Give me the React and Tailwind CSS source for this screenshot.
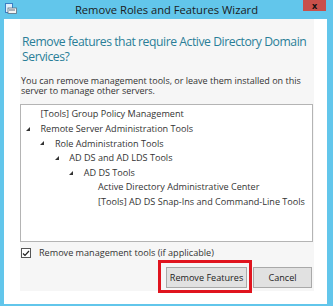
const font = { fontFamily: '"Open Sans", "Noto Sans", sans-serif' };

const rows = [
  { level: 0, label: '[Tools] Group Policy Management', leaf: true },
  { level: 0, label: 'Remote Server Administration Tools' },
  { level: 1, label: 'Role Administration Tools' },
  { level: 2, label: 'AD DS and AD LDS Tools' },
  { level: 3, label: 'AD DS Tools' },
  { level: 4, label: 'Active Directory Administrative Center', leaf: true },
  { level: 4, label: '[Tools] AD DS Snap-Ins and Command-Line Tools', leaf: true },
];

function TreeRow({ level, label, leaf }) {
  return (
    <div className="flex items-center h-[14.6px]" style={{ paddingLeft: 5 + level * 14.4 }}>
      <span className="w-[14.5px] shrink-0 flex items-center">
        {!leaf && (
          <svg width="4" height="4" viewBox="0 0 4 4">
            <path d="M4 0 L4 4 L0 4 Z" fill="#333" />
          </svg>
        )}
      </span>
      <span className="whitespace-nowrap">{label}</span>
    </div>
  );
}

export default function App() {
  return (
    <div className="w-[333px] h-[306px] bg-[#62c6eb] flex flex-col overflow-hidden text-[#262626]" style={font}>
      {/* title bar */}
      <div className="h-[19px] shrink-0 flex items-start">
        <div className="w-[30px] pl-[5px] pt-[3px] shrink-0">
          <svg width="12" height="11" viewBox="0 0 12 11">
            <rect x="0.5" y="0.5" width="7" height="9" fill="#dfeefa" stroke="#3b7fc4" />
            <rect x="3" y="5" width="8.5" height="5.5" fill="#f4f4f4" stroke="#5a6e80" strokeWidth="0.8" />
            <rect x="4" y="6.5" width="6" height="1" fill="#5a6e80" />
          </svg>
        </div>
        <div className="flex-1 text-center pt-[3px] text-[11.2px] leading-[13px] text-[#1b1b1b] whitespace-nowrap">
          Remove Roles and Features Wizard
        </div>
        <div className="w-[23px] h-[11px] shrink-0 bg-[#c9504a] flex items-center justify-center">
          <span className="text-[9px] leading-none font-bold text-[#111]">x</span>
        </div>
        <div className="w-[7px] shrink-0" />
      </div>

      {/* body */}
      <div className="flex-1 ml-[4px] mr-[6px] mb-[2px] bg-white flex flex-col">
        <div className="ml-[16px] mr-[13px] h-[272px] bg-[#f6f6f6] flex flex-col">
          <div className="pl-[2px] pt-[15px] text-[12.2px] tracking-[-0.45px] leading-[15px] text-[#2a7e98] shrink-0">
            Remove features that require Active Directory Domain Services?
          </div>
          <div className="pl-[1px] mt-[12px] text-[9px] leading-[10px] text-[#333] shrink-0">
            You can remove management tools, or leave them installed on this server to manage other servers.
          </div>
          <div className="mt-[8px] mr-[1px] h-[138px] shrink-0 bg-white border border-[#b4b4b4] pt-[2px] text-[9.1px] text-[#333]">
            {rows.map((r) => (
              <TreeRow key={r.label} {...r} />
            ))}
          </div>
          <div className="mt-[6px] h-[10px] shrink-0 flex items-center text-[9.1px] text-[#333]">
            <span className="ml-[1px] w-[10px] h-[10px] border border-[#555] bg-white flex items-center justify-center">
              <svg width="8" height="7" viewBox="0 0 8 7">
                <path d="M1 3.5 L3 5.5 L7 1" stroke="#222" strokeWidth="1.2" fill="none" />
              </svg>
            </span>
            <span className="ml-[8px]">Remove management tools (if applicable)</span>
          </div>
          <div className="mt-[2px] flex justify-end items-start pr-[2px] shrink-0">
            <div className="border-[3px] border-[#e0141e] pt-[4px] pb-[2px] pl-[5px] pr-[2px]">
              <button className="block w-[81px] h-[21px] bg-[#e1e1e1] border border-[#a9a9a9] text-[9.1px] text-[#222] leading-none">
                Remove Features
              </button>
            </div>
            <button className="ml-[1px] mt-[7px] w-[59px] h-[21px] bg-[#e1e1e1] border border-[#a9a9a9] text-[9.1px] text-[#222] leading-none">
              Cancel
            </button>
          </div>
        </div>
      </div>
    </div>
  );
}
